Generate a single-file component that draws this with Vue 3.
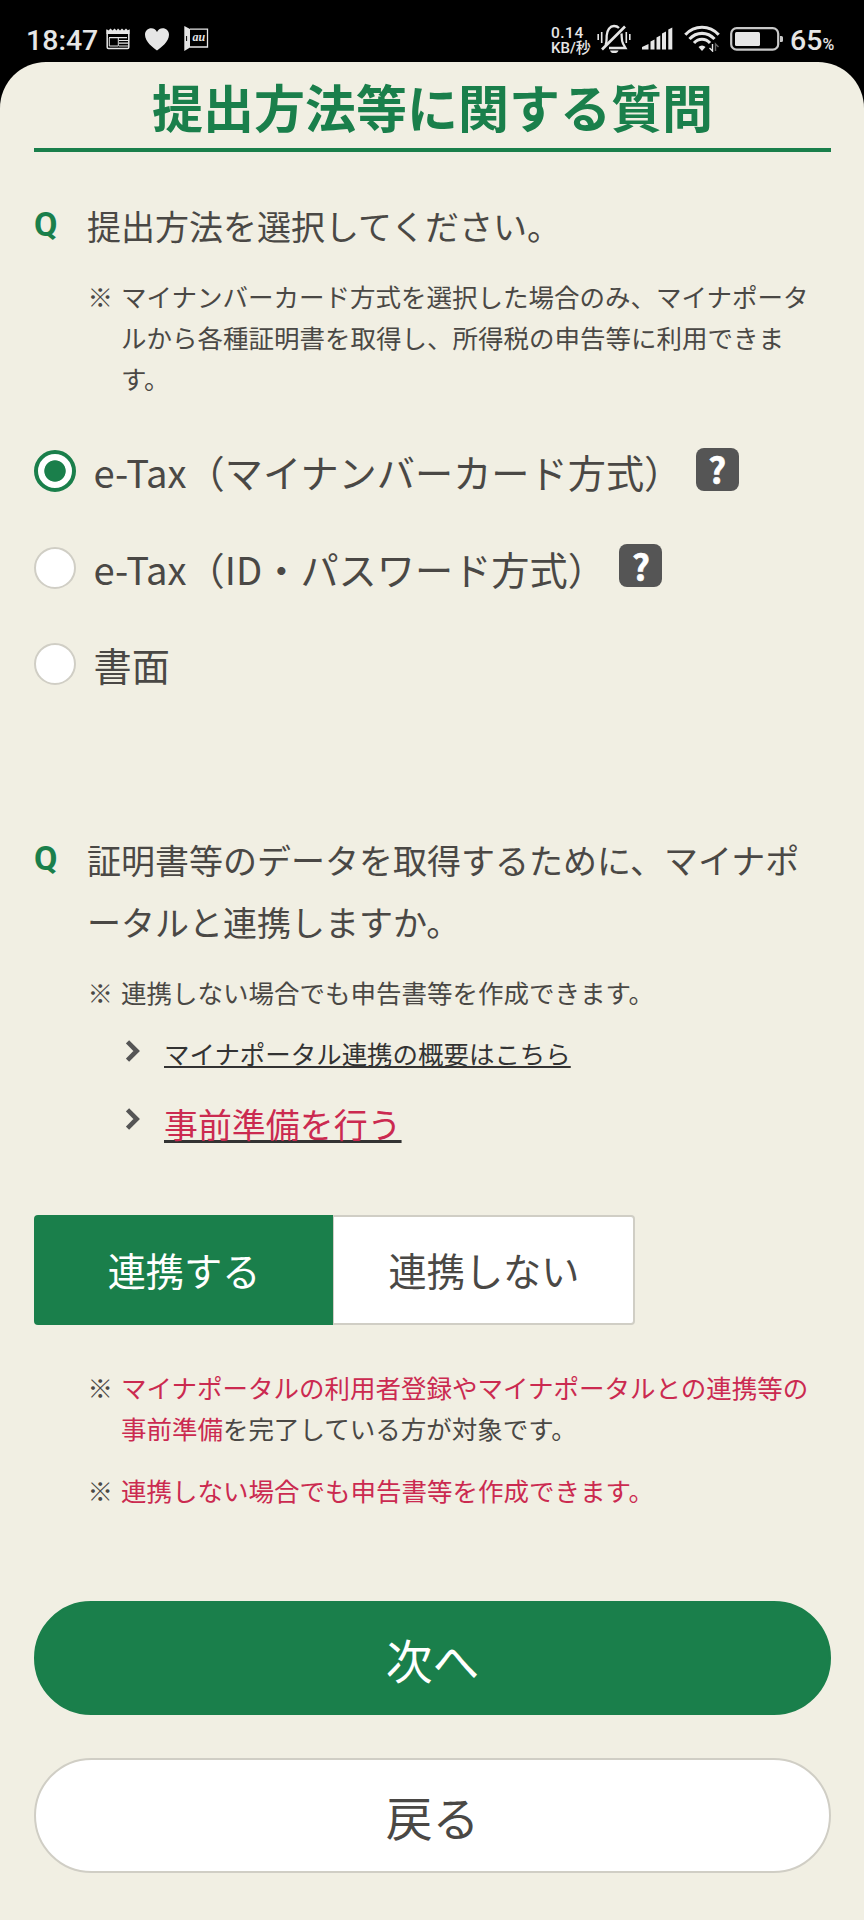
<template>
  <div class="screen" lang="ja">
    <header class="status-bar">
      <div class="status-left">
        <span class="clock">18:47</span>
        <svg class="icon-news" width="24" height="22" viewBox="0 0 24 22">
          <path d="M1.2 2V19.2a1.2 1.2 0 0 0 1.2 1.2H21.6a1.2 1.2 0 0 0 1.2-1.2V2" fill="none" stroke="#e6e6e6" stroke-width="1.5" />
          <path d="M.5 1l2 1.600 2-2 2 2 2-2 2 2 1.500-2 2 2 2-2 2 2 2-2 2 2L23.500 1V6H.5z" fill="#e6e6e6" />
          <path d="M3 9.700h18M13 12.500h9M13 15.200h9M13 18h9" stroke="#e6e6e6" stroke-width="1.2" />
          <path d="M3.300 10v8h9v-8" fill="none" stroke="#e6e6e6" stroke-width="1" />
        </svg>
        <svg class="icon-heart" width="24" height="23" viewBox="0 0 24 23">
          <path d="M12 22.500C8 19.500 0 14 0 6.800 0 2.800 3 .3 6.300.3 9 .3 11 1.700 12 4 13 1.700 15 .3 17.700.3 21 .3 24 2.800 24 6.800 24 14 16 19.500 12 22.500z" fill="#e6e6e6" />
        </svg>
        <svg class="icon-au" width="25" height="25" viewBox="0 0 25 25">
          <path d="M.3 0L6 3V21.500L.3 25z" fill="#e6e6e6" />
          <path d="M6 3.200H23.500V21H6" fill="none" stroke="#e6e6e6" stroke-width="1.300" />
          <path d="M2.600 10v5" stroke="#000" stroke-width="1" />
          <text x="8.500" y="14.500">au</text>
        </svg>
      </div>
      <div class="status-right">
        <div class="net-speed">
          <span class="rate">0.14</span>
          <span class="unit">KB/秒</span>
        </div>
        <svg class="icon-mute" width="34" height="30" viewBox="0 0 34 30">
          <g fill="none" stroke="#e6e6e6" stroke-width="2.300">
            <path d="M8.500 21C10 18.500 9.500 15 9.700 11.500 10 6 13 2 17 2 19 2 20.800 2.700 22 4M24.500 9.500C25 13 24.300 17 26 19.500L28.500 24H12" />
            <path d="M28 2.500L5 25.500" stroke-width="2.600" />
            <path d="M1.200 10v6M4.700 8v11M29.300 8v11M32.800 10v6" stroke-width="1.600" />
          </g>
          <path d="M13 26.500h8.500a4.300 3 0 0 1-8.500 0z" fill="#e6e6e6" />
        </svg>
        <svg class="icon-signal" width="31" height="23" viewBox="0 0 31 23">
          <path d="M0 22.500v-2.500l6.500-3v5.500zM8.500 22.500v-8l4-2v10zM14.500 22.500V10.500l3.800-2v14zM20 22.500V6.500l4-2v18zM26.300 22.500V2.500L30.300.5v22z" fill="#e6e6e6" />
        </svg>
        <svg class="icon-wifi" width="36" height="27" viewBox="0 0 36 27">
          <g fill="none" stroke="#e6e6e6" stroke-width="3.100">
            <path d="M1.300 9.700C10.500-.3 25.500-.3 34.700 9.700" />
            <path d="M5.500 14C12.500 6.500 23.500 6.500 30.500 14" />
            <path d="M10 18C14.500 13 21.500 13 26 18" />
          </g>
          <path d="M14.500 22a4.800 4.800 0 0 1 7 0L18 26z" fill="#e6e6e6" />
          <path d="M28.500 19v7l-3-3" fill="none" stroke="#e6e6e6" stroke-width="1.400" />
          <path d="M31.500 26v-7l3 3" fill="none" stroke="#666" stroke-width="1.400" />
        </svg>
        <svg class="icon-battery" width="54" height="24" viewBox="0 0 54 24">
          <rect x="1.200" y="1.200" width="47" height="21.500" rx="5.500" fill="none" stroke="#c9c9c9" stroke-width="2.200" />
          <rect x="5" y="5" width="25" height="14" rx="1.500" fill="#e6e6e6" />
          <path d="M50 9h1.500a1.500 1.500 0 0 1 1.500 1.500v3a1.500 1.500 0 0 1-1.500 1.500H50z" fill="#c9c9c9" />
        </svg>
        <span class="level">65<small>%</small></span>
      </div>
    </header>

    <main class="sheet">
      <h1 class="title">提出方法等に関する質問</h1>

      <section class="question">
        <h2 class="question-head">
          <span class="q">Q</span>
          <span>提出方法を選択してください。</span>
        </h2>
        <p class="note">
          <span class="mark">※</span>
          <span>マイナンバーカード方式を選択した場合のみ、マイナポータルから各種証明書を取得し、所得税の申告等に利用できます。</span>
        </p>
        <div class="radios">
          <div
            v-for="option in methods"
            :key="option.id"
            class="radio-row"
            @click="method = option.id"
          >
            <span class="radio" :class="{ checked: method === option.id }"></span>
            <span class="radio-label">{{ option.label }}</span>
            <button v-if="option.help" class="help" @click.stop>?</button>
          </div>
        </div>
      </section>

      <section class="question second">
        <h2 class="question-head">
          <span class="q">Q</span>
          <span>証明書等のデータを取得するために、マイナポ<br>ータルと連携しますか。</span>
        </h2>
        <p class="note">
          <span class="mark">※</span>
          <span>連携しない場合でも申告書等を作成できます。</span>
        </p>
        <ul class="links">
          <li>
            <svg class="chevron" width="14" height="22" viewBox="0 0 14 22">
              <path d="M1.500 1.800L10.700 11 1.500 20.200" />
            </svg>
            <a class="link">マイナポータル連携の概要はこちら</a>
          </li>
          <li class="prepare">
            <svg class="chevron" width="14" height="22" viewBox="0 0 14 22">
              <path d="M1.500 1.800L10.700 11 1.500 20.200" />
            </svg>
            <a class="link large">事前準備を行う</a>
          </li>
        </ul>
        <div class="segment">
          <button :class="{ active: linked }" @click="linked = true">連携する</button>
          <button :class="{ active: !linked }" @click="linked = false">連携しない</button>
        </div>
        <p class="note">
          <span class="mark">※</span>
          <span><span class="red">マイナポータルの利用者登録やマイナポータルとの連携等の事前準備</span>を完了している方が対象です。</span>
        </p>
        <p class="note last">
          <span class="mark">※</span>
          <span class="red">連携しない場合でも申告書等を作成できます。</span>
        </p>
      </section>

      <div class="actions">
        <button class="action primary">次へ</button>
        <button class="action">戻る</button>
      </div>
    </main>
  </div>
</template>

<script setup>
import { ref } from 'vue'

const methods = [
  { id: 'card', label: 'e-Tax（マイナンバーカード方式）', help: true },
  { id: 'password', label: 'e-Tax（ID・パスワード方式）', help: true },
  { id: 'paper', label: '書面', help: false }
]

const method = ref('card')
const linked = ref(true)
</script>

<style>
body {
  margin: 0;
  background: #000;
}
</style>

<style scoped>
.screen {
  width: 864px;
  height: 1920px;
  overflow: hidden;
  background: #000;
  color: #4a4845;
  font-family: "Noto Sans CJK JP", sans-serif;
}

button {
  margin: 0;
  padding: 0;
  border: none;
  font-family: inherit;
  color: inherit;
  cursor: pointer;
}

.status-bar {
  display: flex;
  justify-content: space-between;
  height: 62px;
  box-sizing: border-box;
  padding: 24px 30px 0 26px;
  color: #e6e6e6;
  font-family: Roboto, "Noto Sans CJK JP", sans-serif;
  font-weight: 500;
}

.status-left,
.status-right {
  display: flex;
  align-items: flex-start;
}

.clock,
.level {
  font-size: 28.5px;
  line-height: 33px;
}

.clock {
  width: 72px;
}

.icon-news {
  margin: 4px 0 0 8px;
}

.icon-heart {
  margin: 4px 0 0 15px;
}

.icon-au {
  margin: 2px 0 0 15px;
}

.icon-au text {
  fill: #e6e6e6;
  font: italic bold 12px "Liberation Serif", serif;
}

.net-speed {
  display: flex;
  flex-direction: column;
  width: 46px;
  font-size: 15.5px;
  line-height: 15px;
}

.rate {
  padding-top: 2px;
  letter-spacing: 0.5px;
}

.unit {
  font-size: 15px;
  white-space: nowrap;
}

.icon-signal {
  margin: 3px 0 0 11px;
}

.icon-wifi {
  margin: 1px 0 0 11px;
}

.icon-battery {
  margin: 3px 0 0 10px;
}

.level {
  width: 44px;
  margin-left: 6px;
  white-space: nowrap;
}

.level small {
  font-size: 16px;
}

.sheet {
  height: 1858px;
  box-sizing: border-box;
  padding: 0 33px 0 34px;
  border-radius: 46px 46px 0 0;
  background: #f1efe3;
}

.title {
  height: 90px;
  box-sizing: border-box;
  margin: 0;
  padding-top: 12px;
  border-bottom: 4px solid #1a7f4b;
  color: #1a7f4b;
  font-size: 51px;
  font-weight: 700;
  line-height: 64px;
  text-align: center;
}

.question {
  padding-top: 43px;
}

.question.second {
  padding-top: 117px;
}

.question-head {
  display: flex;
  margin: 0;
  font-size: 34px;
  font-weight: 400;
  line-height: 61.1px;
}

.q {
  flex: none;
  width: 53px;
  margin-top: -1px;
  color: #1a7f4b;
  font-family: Roboto, sans-serif;
  font-size: 34px;
  font-weight: 700;
}

.note {
  display: flex;
  margin: 20px 0 0 53.5px;
  font-size: 25.5px;
  line-height: 40.8px;
}

.note.last {
  margin-top: 21px;
}

.mark {
  flex: none;
  width: 33.5px;
}

.red {
  color: #cb2a50;
}

.radios {
  display: grid;
  grid-auto-rows: 96.5px;
  margin-top: 24.5px;
}

.radio-row {
  display: flex;
  align-items: center;
}

.radio {
  flex: none;
  width: 42px;
  height: 42px;
  box-sizing: border-box;
  border: 2px solid #d0cec5;
  border-radius: 50%;
  background: #fff;
}

.radio.checked {
  border: 4px solid #1a7f4b;
  background: radial-gradient(circle, #1a7f4b 10.3px, #fff 11.1px);
}

.radio-label {
  margin: 1px 0 0 17.5px;
  font-size: 38.2px;
  line-height: 61px;
}

.help {
  width: 43px;
  height: 43px;
  margin: -4px 0 0 13.5px;
  border-radius: 8px;
  background: #555;
  color: #fff;
  font-size: 35px;
  font-weight: 700;
  line-height: 42px;
  -webkit-text-stroke: 0.6px #fff;
}

.links {
  margin: 20px 0 0;
  padding: 0 0 0 92px;
  list-style: none;
}

.links li {
  display: flex;
  align-items: flex-start;
}

.chevron {
  flex: none;
  margin-top: 8px;
}

.chevron path {
  fill: none;
  stroke: #555;
  stroke-width: 4.6;
}

.link {
  margin-left: 24px;
  color: #333;
  font-size: 25.46px;
  line-height: 41px;
  text-decoration: underline #333 2px;
  text-decoration-skip-ink: none;
  text-underline-offset: 2px;
}

.link.large {
  color: #cb2a50;
  font-size: 33.95px;
  line-height: 54px;
  text-decoration-thickness: 3px;
}

.prepare {
  margin-top: 23.5px;
}

.prepare .chevron {
  margin-top: 11px;
}

.segment {
  display: flex;
  width: 601px;
  height: 110px;
  margin-top: 64px;
  margin-bottom: 42.5px;
}

.segment button {
  flex: 1;
  box-sizing: border-box;
  padding-left: 1px;
  border: 2px solid #d0cec5;
  border-left-width: 1px;
  border-radius: 0 4px 4px 0;
  background: #fff;
  font-size: 38.2px;
}

.segment button:first-child {
  border-radius: 4px 0 0 4px;
}

.segment button.active {
  border: none;
  background: #1a7f4b;
  color: #fff;
}

.actions {
  display: flex;
  flex-direction: column;
  gap: 43px;
  margin-top: 90px;
}

.action {
  height: 114.5px;
  border: 2px solid #d0cec5;
  border-radius: 58px;
  background: #fff;
  font-size: 46.75px;
}

.action.primary {
  border-color: #1a7f4b;
  background: #1a7f4b;
  color: #fff;
}
</style>
